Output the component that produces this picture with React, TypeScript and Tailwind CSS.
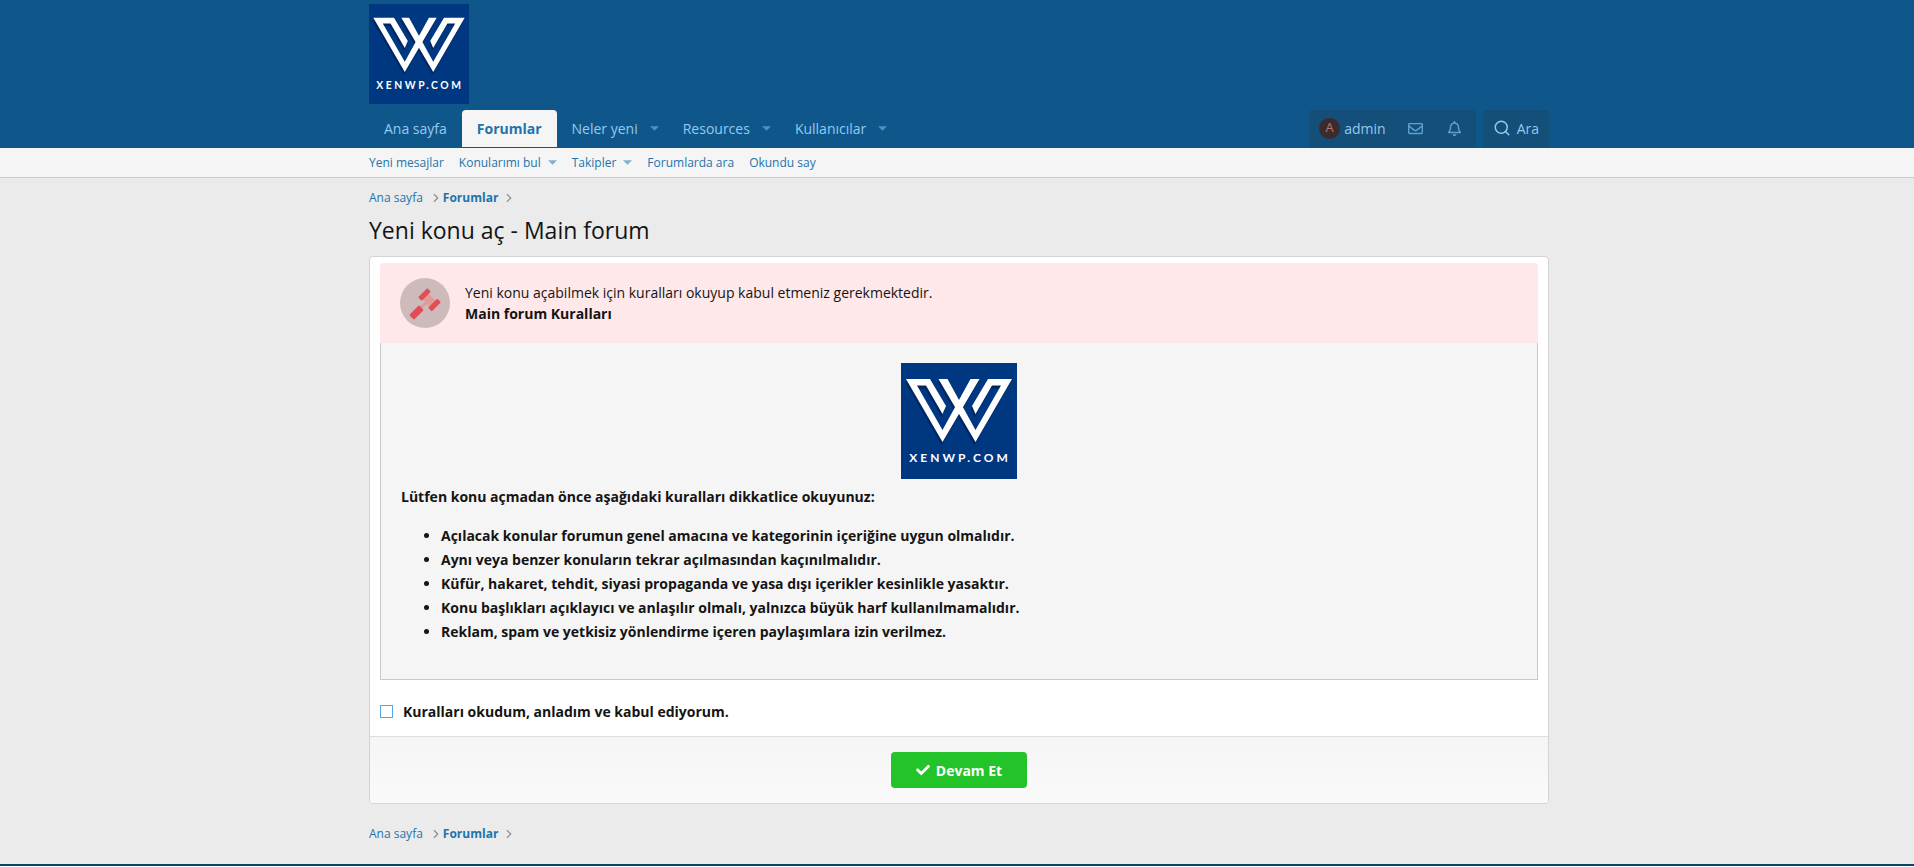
import { ChevronRight, Search } from 'lucide-react';
import { FaCheck, FaRegBell, FaRegEnvelope } from 'react-icons/fa';

const RULES = [
  'Açılacak konular forumun genel amacına ve kategorinin içeriğine uygun olmalıdır.',
  'Aynı veya benzer konuların tekrar açılmasından kaçınılmalıdır.',
  'Küfür, hakaret, tehdit, siyasi propaganda ve yasa dışı içerikler kesinlikle yasaktır.',
  'Konu başlıkları açıklayıcı ve anlaşılır olmalı, yalnızca büyük harf kullanılmamalıdır.',
  'Reklam, spam ve yetkisiz yönlendirme içeren paylaşımlara izin verilmez.',
];

const TABS = [
  { label: 'Ana sayfa' },
  { label: 'Forumlar', active: true },
  { label: 'Neler yeni', menu: true },
  { label: 'Resources', menu: true },
  { label: 'Kullanıcılar', menu: true },
];

const SUB_LINKS = [
  { label: 'Yeni mesajlar' },
  { label: 'Konularımı bul', menu: true },
  { label: 'Takipler', menu: true },
  { label: 'Forumlarda ara' },
  { label: 'Okundu say' },
];

const MARK_LEFT = 'M5 16H29L45 43L41.5 51L25 22.5H16L41.5 67L69.5 16H78.5L41.5 79Z';
const MARK_RIGHT = 'M111 16H87L71 43L74.5 51L91 22.5H100L74.5 67L46.5 16H37.5L74.5 79Z';

function Logo({ className }: { className: string }) {
  return (
    <svg viewBox="0 0 116 116" className={className} role="img" aria-label="XENWP.COM">
      <rect width="116" height="116" fill="#003781" />
      <g fill="#001f55" opacity="0.7" transform="translate(-1 3)">
        <path d={MARK_LEFT} />
        <path d={MARK_RIGHT} />
      </g>
      <g fill="#fff">
        <path d={MARK_LEFT} />
        <path d={MARK_RIGHT} />
      </g>
      <text x="59" y="99" textAnchor="middle" fill="#fff" className="font-['Lato',sans-serif] text-[12px] font-bold tracking-[3px]">
        XENWP.COM
      </text>
    </svg>
  );
}

function Caret({ className }: { className: string }) {
  return (
    <svg viewBox="0 0 10 5" className={`w-[9px] h-[5px] ${className}`} fill="currentColor" aria-hidden="true">
      <path d="M0 0H10L5 5Z" />
    </svg>
  );
}

function Gavel() {
  return (
    <svg viewBox="0 0 50 50" className="size-[50px] shrink-0" aria-hidden="true">
      <circle cx="25" cy="25" r="25" fill="#cdbaba" />
      <path d="M28 15L36 23L30 29L27 26L21 31L19 29L25 24L22 21Z" fill="#e39a9b" />
      <g fill="#e34e56">
        <rect x="18" y="14" width="13" height="5" rx="1" transform="rotate(-45 24.5 16.5)" />
        <rect x="28" y="24.5" width="13" height="5" rx="1" transform="rotate(-45 34.5 27)" />
        <rect x="9.5" y="31" width="14" height="7" rx="1.5" transform="rotate(-45 16.5 34.5)" />
      </g>
    </svg>
  );
}

function Breadcrumb() {
  return (
    <nav className="flex h-5 items-center text-[12px] text-[#1d74ac]">
      <a href="#">Ana sayfa</a>
      <ChevronRight size={14} className="ml-1.5 text-[#8c8c8c]" />
      <a href="#" className="font-bold">Forumlar</a>
      <ChevronRight size={14} className="ml-1 text-[#8c8c8c]" />
    </nav>
  );
}

export default function App() {
  return (
    <div className="bg-[#ebebeb] font-['Open_Sans','Noto_Sans',sans-serif] text-[14px] text-[#141414]">
      <header className="bg-[#0f578a] pt-1">
        <div className="mx-auto max-w-[1204px] pl-3.5 pr-2.5">
          <a href="#" className="block w-[100px]">
            <Logo className="size-[100px]" />
          </a>
          <div className="mt-1.5 flex h-[38px] justify-between text-[#94c9ef]">
            <nav className="flex">
              {TABS.map((tab) =>
                tab.active ? (
                  <a key={tab.label} href="#" className="mb-px flex items-center rounded-t-sm bg-[#f5f5f5] px-[15px] font-bold text-[#1d74ac]">
                    {tab.label}
                  </a>
                ) : (
                  <a key={tab.label} href="#" className="flex items-center px-[15px] pb-0.5">
                    {tab.label}
                    {tab.menu && <Caret className="ml-3 -mr-1.5 text-[#5191c0]" />}
                  </a>
                ),
              )}
            </nav>
            <div className="flex gap-[7px]">
              <div className="flex items-center rounded-t bg-[#134f78] pb-0.5 pl-2.5">
                <a href="#" className="flex items-center gap-1">
                  <span className="flex size-[21px] items-center justify-center rounded-full bg-[#3d2a2d] text-[13px] text-[#b37a7a]">A</span>
                  admin
                </a>
                <button type="button" aria-label="Mesajlar" className="ml-[22px] text-[#5fa0cf]">
                  <FaRegEnvelope size={15} />
                </button>
                <button type="button" aria-label="Bildirimler" className="ml-6 mr-[14px] text-[#5fa0cf]">
                  <FaRegBell size={15} />
                </button>
              </div>
              <button type="button" className="flex items-center gap-1.5 rounded-t bg-[#134f78] px-2.5 pb-0.5">
                <Search size={18} strokeWidth={2} />
                Ara
              </button>
            </div>
          </div>
        </div>
      </header>

      <div className="border-b border-[#cbcbcb] bg-[#f5f5f5]">
        <nav className="mx-auto flex h-[29px] max-w-[1204px] items-center gap-[15px] pl-3.5 pr-2.5 text-[12px] text-[#1d74ac]">
          {SUB_LINKS.map((link) => (
            <a key={link.label} href="#" className="flex items-center">
              {link.label}
              {link.menu && <Caret className="ml-[7px] text-[#7fb0d2]" />}
            </a>
          ))}
        </nav>
      </div>

      <main className="mx-auto max-w-[1204px] pt-2.5 pl-3.5 pr-2.5">
        <Breadcrumb />
        <h1 className="mt-[7px] text-[23px] leading-[30px]">Yeni konu aç - Main forum</h1>

        <form className="mt-[11px] rounded border border-[#d4d4d4] bg-white">
          <div className="px-2.5 pt-1.5 pb-3">
            <div className="flex h-20 items-center gap-[15px] rounded-t-sm bg-[#fee8e9] px-5 leading-[21px]">
              <Gavel />
              <div>
                <p>Yeni konu açabilmek için kuralları okuyup kabul etmeniz gerekmektedir.</p>
                <p className="font-bold">Main forum Kuralları</p>
              </div>
            </div>
            <div className="border border-t-0 border-[#c9c9c9] bg-[#f5f5f5] px-5 pt-5 pb-[35px] font-bold">
              <Logo className="mx-auto size-[116px]" />
              <p className="mt-1.5 leading-6">Lütfen konu açmadan önce aşağıdaki kuralları dikkatlice okuyunuz:</p>
              <ul className="mt-[15px] list-disc pl-10 leading-6">
                {RULES.map((rule) => (
                  <li key={rule}>{rule}</li>
                ))}
              </ul>
            </div>
            <label className="mt-[19px] mb-px flex h-6 items-center gap-2.5 font-bold">
              <input type="checkbox" className="size-[13px] appearance-none border border-[#53a9dd] bg-white" />
              Kuralları okudum, anladım ve kabul ediyorum.
            </label>
          </div>
          <div className="flex justify-center rounded-b border-t border-[#dedede] bg-linear-to-b from-[#f5f5f5] to-[#fafafa] py-[15px]">
            <button type="button" className="flex h-9 w-[136px] items-center justify-center gap-1.5 rounded bg-[#22c42a] font-bold text-white">
              <FaCheck size={14} />
              Devam Et
            </button>
          </div>
        </form>

        <div className="mt-5 pb-5">
          <Breadcrumb />
        </div>
      </main>
      <footer className="h-0.5 bg-[#0b4369]" />
    </div>
  );
}
